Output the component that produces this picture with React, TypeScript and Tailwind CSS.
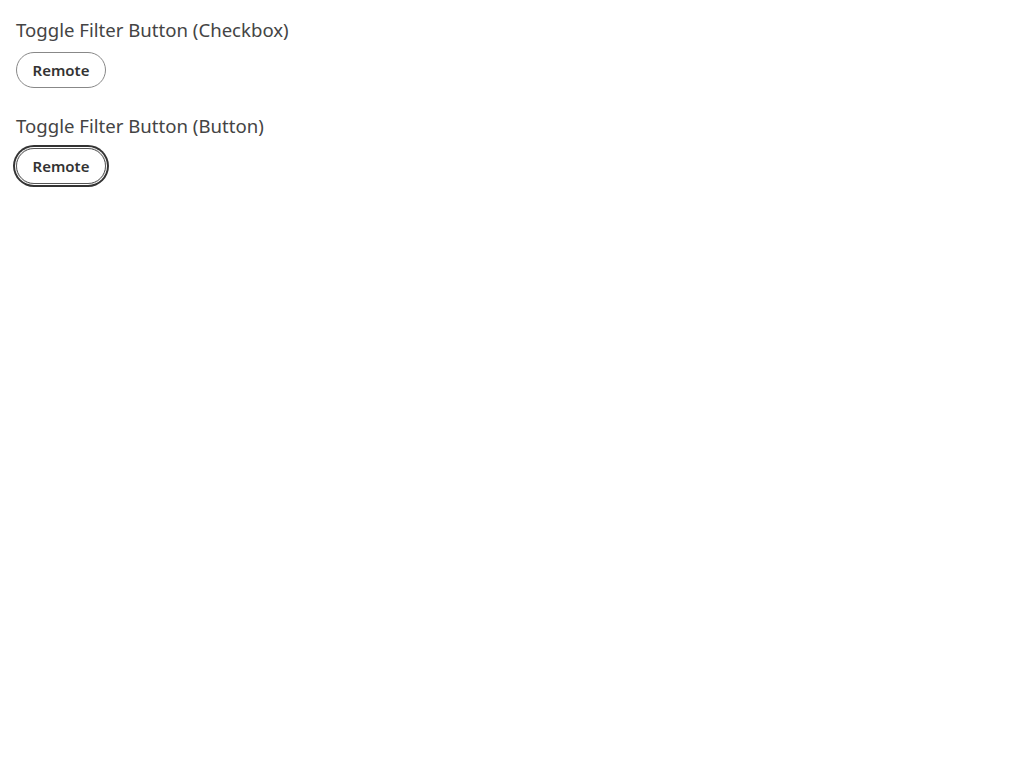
export default function App() {
  return (
    <div className="min-h-screen bg-white px-4 pt-[18px] font-['Source_Sans_Pro','Noto_Sans',sans-serif] text-[#333]">
      <h2 className="text-[18.6px] leading-[24px] text-[#444]">Toggle Filter Button (Checkbox)</h2>
      <label className="mt-[10px] flex h-9 w-[90px] cursor-pointer items-center justify-center rounded-full border border-[#888] text-[15px] font-semibold">
        <input type="checkbox" className="sr-only" />
        Remote
      </label>
      <h2 className="mt-[26px] text-[18.6px] leading-[24px] text-[#444]">Toggle Filter Button (Button)</h2>
      <button className="mt-[10px] flex h-9 w-[90px] items-center justify-center rounded-full border border-[#555] text-[15px] font-semibold shadow-[0_0_0_1px_#fff,0_0_0_3px_#333]">
        Remote
      </button>
    </div>
  );
}
